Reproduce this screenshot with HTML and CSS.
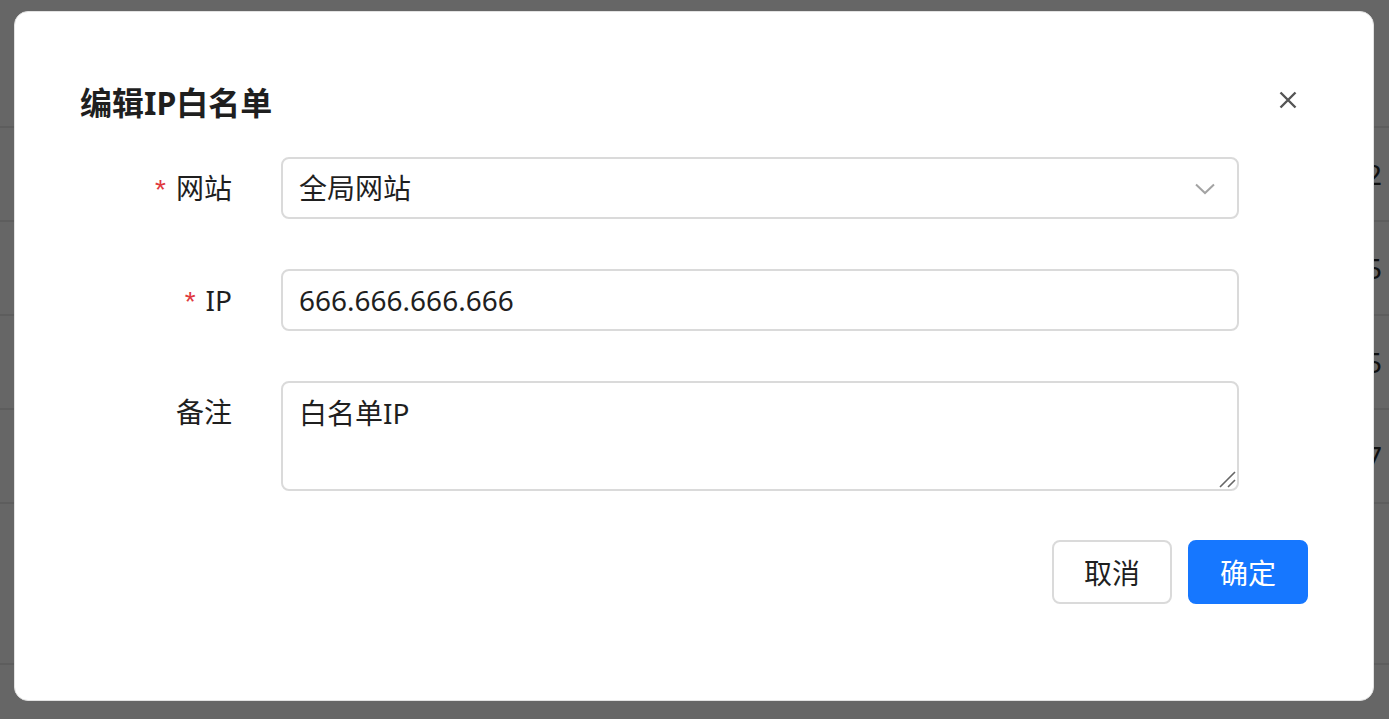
FILE: index.html
```html
<!DOCTYPE html>
<html lang="zh-CN">
<head>
<meta charset="utf-8">
<title>编辑IP白名单</title>
<link rel="stylesheet" href="styles.css">
</head>
<body>
<div class="page">
  <div class="table-head"></div>
  <div class="row"><span class="cell">2</span></div>
  <div class="row"><span class="cell">5</span></div>
  <div class="row"><span class="cell">5</span></div>
  <div class="row"><span class="cell">7</span></div>
  <div class="row tall"></div>
</div>
<div class="mask"></div>
<div class="modal">
  <div class="modal-header">
    <div class="modal-title">编辑IP白名单</div>
    <button class="modal-close" aria-label="关闭">
      <svg width="18" height="18" viewBox="0 0 18 18"><path d="M1.5 1.5 L16.5 16.5 M16.5 1.5 L1.5 16.5" stroke="#555" stroke-width="2.4" fill="none" stroke-linecap="butt"/></svg>
    </button>
  </div>
  <div class="form">
    <div class="label"><span class="req">*</span>网站</div>
    <div class="field select">
      <span>全局网站</span>
      <svg class="chev" width="20" height="12" viewBox="0 0 20 12"><path d="M1 1.5 L10 10 L19 1.5" stroke="#a3a3a3" stroke-width="2" fill="none"/></svg>
    </div>
    <div class="label"><span class="req">*</span>IP</div>
    <div class="field">666.666.666.666</div>
    <div class="label">备注</div>
    <div class="field area">
      <span>白名单IP</span>
      <svg class="grip" width="18" height="18" viewBox="0 0 18 18"><path d="M2 17 L17 2 M10 17 L17 10" stroke="#666" stroke-width="1.6" fill="none"/></svg>
    </div>
  </div>
  <div class="footer">
    <button class="btn">取消</button>
    <button class="btn primary">确定</button>
  </div>
</div>
</body>
</html>
```
FILE: styles.css
```css
* { box-sizing: border-box; }
html, body { margin: 0; padding: 0; }
body {
  width: 1389px;
  height: 719px;
  overflow: hidden;
  background: #fff;
  font-family: "Noto Sans", "Noto Sans CJK SC", sans-serif;
  color: #1f1f1f;
  position: relative;
}
.page { width: 100%; }
.table-head { height: 128px; border-bottom: 2px solid #e8e8e8; }
.row {
  height: 94px;
  border-bottom: 2px solid #e8e8e8;
  display: flex;
  align-items: center;
  padding-left: 1366px;
  font-size: 28px;
  color: #2a2a2a;
}
.row.tall { height: 161px; }
.mask {
  position: absolute;
  inset: 0;
  background: rgba(0, 0, 0, 0.6);
}
.modal {
  position: absolute;
  left: 14px;
  top: 11px;
  width: 1360px;
  height: 690px;
  background: #fff;
  border: 1px solid #e2e2e2;
  border-radius: 14px;
  padding: 69px 65px 0 65px;
  display: flex;
  flex-direction: column;
}
.modal-header {
  display: flex;
  align-items: center;
  justify-content: space-between;
  height: 44px;
}
.modal-title {
  font-size: 32px;
  font-weight: 700;
  line-height: 44px;
  color: #1f1f1f;
}
.modal-close {
  width: 36px;
  height: 36px;
  margin-right: 2px;
  margin-top: -6px;
  border: 0;
  background: transparent;
  padding: 0;
  display: flex;
  align-items: center;
  justify-content: center;
}
.form {
  margin-top: 32px;
  display: grid;
  grid-template-columns: 152px 958px;
  column-gap: 49px;
  row-gap: 50px;
  font-size: 28px;
}
.label {
  text-align: right;
  line-height: 62px;
  height: 62px;
  white-space: nowrap;
}
.req {
  color: #e0393e;
  margin-right: 10px;
  font-family: "Liberation Sans", sans-serif;
  font-size: 28px;
}
.field {
  height: 62px;
  border: 2px solid #dadada;
  border-radius: 8px;
  padding: 0 22px 0 16px;
  display: flex;
  align-items: center;
  line-height: 44px;
  color: #1f1f1f;
}
.select { justify-content: space-between; }
.chev { margin-right: 0; margin-top: 1px; }
.area {
  height: 110px;
  align-items: flex-start;
  padding-top: 8px;
  position: relative;
}
.grip {
  position: absolute;
  right: 1px;
  bottom: 1px;
}
.footer {
  margin-top: 49px;
  display: flex;
  justify-content: flex-end;
  gap: 16px;
}
.btn {
  width: 120px;
  height: 64px;
  border-radius: 8px;
  border: 2px solid #dadada;
  background: #fff;
  font-family: "Noto Sans", "Noto Sans CJK SC", sans-serif;
  font-size: 28px;
  color: #1f1f1f;
  padding: 0;
}
.btn.primary {
  background: #1677ff;
  border-color: #1677ff;
  color: #fff;
}
```
